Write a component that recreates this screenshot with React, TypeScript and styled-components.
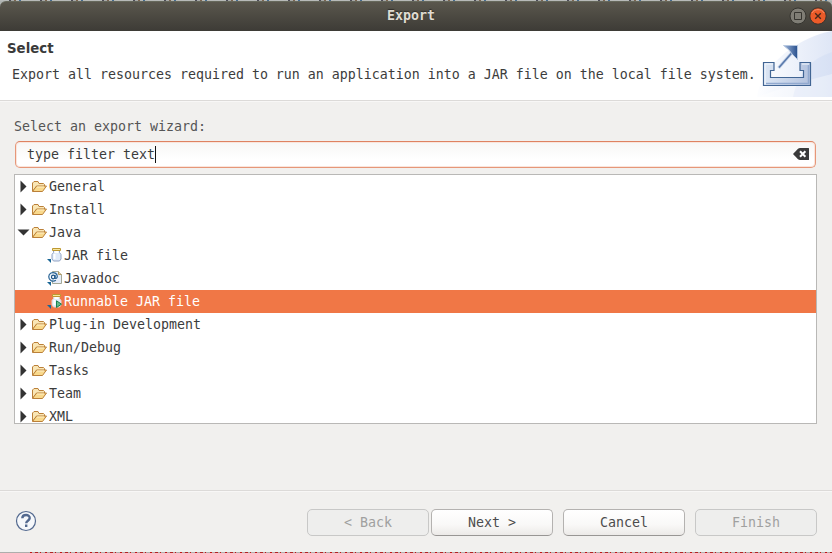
import React from "react";
import styled, { createGlobalStyle } from "styled-components";

const GlobalStyle = createGlobalStyle`
  * { box-sizing: border-box; }
  body { margin: 0; background: #f1f0ee; overflow: hidden; }
`;

const Screen = styled.div`
  width: 832px;
  height: 553px;
  display: flex;
  flex-direction: column;
  overflow: hidden;
  background: #aeb2b0;
  color: #3c3c3c;
  font: 13.29px/23px "DejaVu Sans Mono", monospace;
  white-space: pre;
`;

const CodeStrip = styled.div<{ $bottom?: boolean }>`
  flex: 0 0 1px;
  background: ${(p) =>
    p.$bottom
      ? "linear-gradient(90deg, #aeaeac 30px, transparent 30px), repeating-linear-gradient(90deg, #c11414 0 2px, #b5a9a7 2px 5px, #b02424 5px 8px, #b0b0ae 8px 10px, #c11414 10px 11px, #b0b0ae 11px 15px)"
      : "repeating-linear-gradient(90deg, #b7bab8 0 9px, #4c4c56 9px 11px, #a8aaa9 11px 14px, #7b6550 14px 16px, #b7bab8 16px 19px, #456b8e 19px 21px, #b7bab8 21px 31px)"};
`;

const TitleBar = styled.header`
  flex: 0 0 30px;
  display: grid;
  grid-template-columns: 1fr auto 1fr;
  align-items: center;
  padding: 0 5px 0 0;
  border-radius: 6px 6px 0 0;
  border-top: 1px solid #66685b;
  background: linear-gradient(#5a574d, #3d3b36);
`;

const Title = styled.h1`
  grid-column: 2;
  margin: 0 0 1px;
  padding-right: 5px;
  font-size: 13.29px;
  line-height: 22px;
  color: #dfdbd2;
  text-shadow: 0 -1px 1px #302e2a;
`;

const WindowControls = styled.div`
  display: flex;
  justify-content: flex-end;
  gap: 2px;
  padding-bottom: 2px;
`;

const Banner = styled.section`
  flex: 0 0 69px;
  display: flex;
  background: #fff;
`;

const BannerText = styled.div`
  flex: 1;
  padding: 7px 0 0 7px;
`;

const Heading = styled.h2`
  margin: 0;
  font: bold 13.33px/22px "DejaVu Sans", sans-serif;
  color: #3a3a3a;
`;

const Description = styled.p`
  margin: 3px 0 0 5px;
`;

const BannerArt = styled.svg`
  display: block;
  width: 75px;
  height: 69px;
`;

const Content = styled.main`
  flex: 1;
  display: flex;
  flex-direction: column;
  padding: 14px 15px 0 14px;
  background: #f1f0ee;
  border-top: 1px solid #dcdad8;
  box-shadow: inset 0 1px #f8f7f6;
`;

const FieldLabel = styled.label`
  color: #555;
  line-height: 23px;
`;

const FilterBox = styled.div`
  display: flex;
  align-items: center;
  justify-content: space-between;
  height: 27px;
  margin: 3px 1px 0;
  padding: 0 5px 1px 11px;
  border: 1px solid #e69779;
  border-top-color: #de8261;
  border-radius: 5px;
  background: linear-gradient(#f7f6f5, #fff 70%);
  box-shadow: inset 0 0 0 1px #fae5dc;
`;

const FilterText = styled.span`
  height: 17px;
  line-height: 17px;
  border-right: 1px solid #111;
`;

const Tree = styled.ul`
  height: 250px;
  margin: 6px 0 0;
  padding: 0;
  list-style: none;
  overflow: hidden;
  border: 1px solid #b9b8b6;
  background: #fff;
`;

const TreeRow = styled.li<{ $child?: boolean; $selected?: boolean }>`
  display: flex;
  align-items: center;
  height: 23px;
  padding-left: ${(p) => (p.$child ? 32 : 2)}px;
  background: ${(p) => (p.$selected ? "#f07746" : "transparent")};
  color: ${(p) => (p.$selected ? "#fff" : "#3c3c3c")};
`;

const RowText = styled.span`
  line-height: 23px;
`;

const Glyph = styled.svg`
  display: block;
  flex: none;
`;

const Footer = styled.footer`
  flex: 0 0 62px;
  display: flex;
  align-items: flex-start;
  justify-content: space-between;
  padding: 18px 15px 0;
  background: #f1f0ee;
  border-top: 1px solid #dcdad8;
  box-shadow: inset 0 1px #f8f7f6;
`;

const ButtonRow = styled.div`
  display: flex;
  gap: 10px;
`;

const ButtonPair = styled.div`
  display: flex;
  gap: 2px;
`;

const Button = styled.button`
  width: 122px;
  height: 27px;
  padding: 0;
  font: inherit;
  line-height: 24px;
  color: #4c4c4c;
  border: 1px solid #b4b2b0;
  border-bottom-color: #989694;
  border-radius: 5px;
  background: linear-gradient(#fff, #f9f8f7 60%, #eceae8);
  &:disabled {
    color: #a0a09f;
    border-color: #c8c8c7;
    background: #eeeeed;
  }
`;

type IconKind = "folder" | "jar" | "javadoc" | "runnable";

const Arrow = ({ open }: { open?: boolean }) => (
  <Glyph width="14" height="14" viewBox="0 0 14 14" fill="#333">
    {open ? <path d="M.5 3.5h12L6.5 9.5z" /> : <path d="M3.5.5v12l6-6z" />}
  </Glyph>
);

const Folder = () => (
  <Glyph width="18" height="16" viewBox="0 0 18 16">
    <path d="M1.5 12V4l1.5-1.5h4l1 2h4.5l1 1V8H5l-3 4z" fill="#f9e6b5" stroke="#bb8039" />
    <path d="M1.5 12.5 5.5 7h10L11.5 12.5z" fill="#f9d98c" stroke="#bb8039" strokeLinejoin="round" />
    <path d="M6 8h7" stroke="#fff0c7" />
  </Glyph>
);

const Shortcut = () => <path d="M0 12h4v4z" fill="#196695" />;

const Jar = ({ run }: { run?: boolean }) => (
  <Glyph width="17" height="17" viewBox="0 0 17 17">
    <path
      d="M6.5 3.5h6v2l1.5 2v4.5L12.5 14h-6L5 12V7.5l1.5-2z"
      fill="#e1ebf9"
      stroke={run ? "#e3d3cf" : "#92a3c3"}
    />
    <path d="M7.5 7v5M7.5 5h4" stroke="#fff" strokeWidth="2" />
    <path d="M5.5 1.5h8v2h-8z" fill="#f7e69f" stroke="#bd9832" />
    {run && <path d="M9.5 7.8v6.7l5-3.35z" fill="#65b889" stroke="#168150" />}
    <Shortcut />
  </Glyph>
);

const Javadoc = () => (
  <Glyph width="17" height="17" viewBox="0 0 17 17">
    <path d="M5.5 1.5h6l3 3v9h-9z" fill="#e6edf9" stroke="#a3a998" />
    <path d="M11.5 1.5v3h3" fill="#e9d6a2" stroke="#b39a62" />
    <path
      d="M8.9 10.3Q6.5 11.8 4 10.6C1 9 1 4.5 4 3c3-1.3 6.3.5 6.3 3.5 0 2-2.3 2.6-2.3.8l.3-2.1"
      fill="#f2f7fc"
      stroke="#286394"
      strokeWidth="1.2"
    />
    <ellipse cx="6.2" cy="7" rx="1.7" ry="1.9" fill="none" stroke="#174e80" strokeWidth="1.1" />
    <Shortcut />
  </Glyph>
);

const RowIcon = ({ kind }: { kind: IconKind }) => {
  if (kind === "folder") return <Folder />;
  if (kind === "javadoc") return <Javadoc />;
  return <Jar run={kind === "runnable"} />;
};

const ExportArt = () => (
  <BannerArt viewBox="757 31 75 69">
    <defs>
      <linearGradient id="halo">
        <stop stopColor="#fcfdff" />
        <stop offset="1" stopColor="#d4def3" />
      </linearGradient>
      <linearGradient id="metal">
        <stop stopColor="#dce6f4" />
        <stop offset="1" stopColor="#b3c2de" />
      </linearGradient>
      <linearGradient id="arrow">
        <stop stopColor="#a1b7da" />
        <stop offset="1" stopColor="#28508e" />
      </linearGradient>
    </defs>
    <path d="M757 97C760 69 794 38 832 31v66z" fill="url(#halo)" opacity=".75" />
    <path d="M793 97c5-24 18-38 39-45v45z" fill="#cedaf2" opacity=".4" />
    <path d="M757 97q38-14 75-23v23z" fill="#fff" opacity=".35" />
    <path
      d="M763.5 62.5h10.5v8h-3.5v7h33v-7h-3.5v-8h10.5v23h-47z"
      fill="url(#metal)"
      stroke="#416594"
      strokeWidth="1.2"
    />
    <path d="M765 84V64h8M802 64h7" fill="none" stroke="#f2f7fd" />
    <path d="M766 83.5h42.5V65" fill="none" stroke="#91a9cf" strokeWidth="1.5" />
    <path d="m778.5 68 14-16" stroke="#cad7ea" strokeWidth="3.4" />
    <path d="m779 67.5 14-16" stroke="#5979ac" strokeWidth="1.7" />
    <path d="M783.5 45.5h14v14L792 54l-3-4z" fill="url(#arrow)" stroke="#b7c8e0" />
  </BannerArt>
);

const rows: { text: string; kind: IconKind; open?: boolean; selected?: boolean }[] = [
  { text: "General", kind: "folder" },
  { text: "Install", kind: "folder" },
  { text: "Java", kind: "folder", open: true },
  { text: "JAR file", kind: "jar" },
  { text: "Javadoc", kind: "javadoc" },
  { text: "Runnable JAR file", kind: "runnable", selected: true },
  { text: "Plug-in Development", kind: "folder" },
  { text: "Run/Debug", kind: "folder" },
  { text: "Tasks", kind: "folder" },
  { text: "Team", kind: "folder" },
  { text: "XML", kind: "folder" },
];

export default function App() {
  return (
    <Screen>
      <GlobalStyle />
      <CodeStrip />
      <TitleBar>
        <Title>Export</Title>
        <WindowControls>
          <Glyph width="18" height="18" viewBox="0 0 18 18">
            <circle cx="9" cy="9" r="8" fill="#7f7d75" stroke="#35342f" />
            <path d="M5.5 5.5h7v7h-7z" fill="none" stroke="#363530" />
          </Glyph>
          <Glyph width="18" height="18" viewBox="0 0 18 18">
            <circle cx="9" cy="9" r="8.2" fill="#ec5b29" stroke="#39322d" />
            <path d="M3 6a7 7 0 0 1 12 0" fill="none" stroke="#f48c65" />
            <path d="m6.2 6.2 5.6 5.6m0-5.6-5.6 5.6" stroke="#482719" strokeWidth="1.4" />
          </Glyph>
        </WindowControls>
      </TitleBar>
      <Banner>
        <BannerText>
          <Heading>Select</Heading>
          <Description>
            Export all resources required to run an application into a JAR file on the local file system.
          </Description>
        </BannerText>
        <ExportArt />
      </Banner>
      <Content>
        <FieldLabel>Select an export wizard:</FieldLabel>
        <FilterBox>
          <FilterText>type filter text</FilterText>
          <Glyph width="17" height="12" viewBox="0 0 17 12">
            <path d="M0 6 5 .8Q6 0 7 0h8.5q.5 0 .5.5v11q0 .5-.5.5H7q-1 0-2-.8z" fill="#3a3a3a" />
            <path d="m7 3.3 5.4 5.4m0-5.4L7 8.7" stroke="#fff" strokeWidth="2" />
          </Glyph>
        </FilterBox>
        <Tree>
          {rows.map((row) => (
            <TreeRow key={row.text} $child={row.kind !== "folder"} $selected={row.selected}>
              {row.kind === "folder" && <Arrow open={row.open} />}
              <RowIcon kind={row.kind} />
              <RowText>{row.text}</RowText>
            </TreeRow>
          ))}
        </Tree>
      </Content>
      <Footer>
        <Glyph width="22" height="24" viewBox="0 0 22 24">
          <circle cx="11" cy="12" r="9.5" fill="#f6f8fb" stroke="#53698f" strokeWidth="1.2" />
          <path
            d="M7.3 9.3C7.5 4.8 15 5.2 14.7 9.2c-.2 2.5-3.5 2.5-3.5 5M11.2 15.5v2.4"
            fill="none"
            stroke="#53698f"
            strokeWidth="2.4"
          />
        </Glyph>
        <ButtonRow>
          <ButtonPair>
            <Button disabled>{"< Back"}</Button>
            <Button>{"Next >"}</Button>
          </ButtonPair>
          <Button>Cancel</Button>
          <Button disabled>Finish</Button>
        </ButtonRow>
      </Footer>
      <CodeStrip $bottom />
    </Screen>
  );
}
